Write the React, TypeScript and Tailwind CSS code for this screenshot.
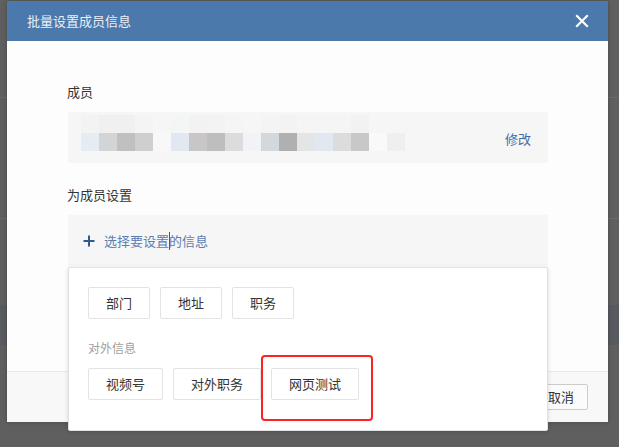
import React from "react";

const FONT = '"Noto Sans CJK SC", "Noto Sans", sans-serif';

const bottomRow = [
  "#e6ecf4", "#d3d4d6", "#c0c0be", "#cfcfcf", "#f7f8f7", "#e1e8f2", "#c8c6c6",
  "#bebebe", "#dcdcdd", "#f1f3f6", "#d3d8dd", "#b0b0b0", "#e4e5e7", "#e2e8f2",
  "#dcdcdc", "#c8c8c8", "#f9f9f9", "#efefef",
];
const topRow = [
  "#f3f3f3", "#f0f0f0", "#f0f0f0", "#f4f4f4", "#f6f6f6", "#f4f5f5", "#f2f2f2",
  "#f3f3f3", "#f5f5f5", "#f6f6f6", "#f4f4f4", "#f3f3f3", "#f5f5f5", "#f5f5f5",
  "#f5f5f5", "#f2f2f2", "#f6f6f6", "#f6f6f6",
];

function Btn({ children }: { children: React.ReactNode }) {
  return (
    <div className="h-[32px] px-[17px] flex items-center border border-[#e3e3e3] rounded-[2px] bg-white text-[13px] text-[#333]">
      {children}
    </div>
  );
}

export default function App() {
  return (
    <div
      className="relative w-[619px] h-[447px] overflow-hidden bg-[#5f5f5f]"
      style={{ fontFamily: FONT }}
    >
      {/* background page rows */}
      <div className="absolute inset-0 flex flex-col">
        <div className="h-[97px]" />
        <div className="h-[121px] border-t border-[#6a6a6a]" />
        <div className="h-[47px] border-t border-[#6a6a6a]" />
        <div className="h-[40px]" />
        <div className="h-[40px] bg-[#575a5e]" />
      </div>

      {/* modal */}
      <div className="absolute left-[7px] top-[1px] w-[601px] h-[421px] flex flex-col bg-[#fdfdfd] shadow-[0_0_4px_rgba(0,0,0,0.25)]">
        <div className="h-[40px] shrink-0 bg-[#4c79ab] flex items-center justify-between pl-[20px] pr-[19px]">
          <span className="text-[13px] text-[#e9eff7]">批量设置成员信息</span>
          <svg width="14" height="14" viewBox="0 0 14 14">
            <path d="M2 2 L12 12 M12 2 L2 12" stroke="#ffffff" strokeWidth="2.2" strokeLinecap="square" />
          </svg>
        </div>

        <div className="flex-1 flex flex-col pl-[60px] pt-[41px]">
          <div className="h-[20px] leading-[20px] text-[13px] text-[#333]">成员</div>
          <div className="mt-[10px] ml-[1px] w-[480px] h-[51px] bg-[#f6f6f6] flex items-start pt-[3px] pl-[13px] pr-[17px] relative">
            <div className="flex flex-col">
              <div className="flex">
                {topRow.map((c, i) => (
                  <div key={i} className="w-[18px] h-[18px]" style={{ backgroundColor: c }} />
                ))}
              </div>
              <div className="flex">
                {bottomRow.map((c, i) => (
                  <div key={i} className="w-[18px] h-[18px]" style={{ backgroundColor: c }} />
                ))}
              </div>
            </div>
            <div className="flex-1" />
            <div className="self-center text-[13px] text-[#3c6da7]">修改</div>
          </div>

          <div className="mt-[22px] h-[20px] leading-[20px] text-[13px] text-[#333]">为成员设置</div>
          <div className="mt-[10px] ml-[1px] w-[480px] h-[51px] bg-[#f6f6f6] flex items-center pl-[15px]">
            <svg width="12" height="12" viewBox="0 0 12 12">
              <path d="M6 0.5 V11.5 M0.5 6 H11.5" stroke="#33598d" strokeWidth="2" />
            </svg>
            <span className="ml-[9px] text-[13px] text-[#5b7db0] flex items-center">
              选择要设置
              <span className="inline-block w-[1px] h-[18px] bg-[#2f5c9f] -mr-[1px]" />
              的信息
            </span>
          </div>
        </div>

        <div className="h-[51px] shrink-0 border-t border-[#e9e9e9] bg-[#f8f8f8] flex items-center justify-end pr-[20px]">
          <div className="h-[26px] w-[54px] flex items-center justify-center border border-[#cccccc] rounded-[2px] bg-[#fbfbfb] text-[13px] text-[#333]">
            取消
          </div>
        </div>

        {/* dropdown */}
        <div className="absolute left-[61px] top-[266px] w-[480px] h-[164px] bg-white border border-[#e2e2e2] rounded-[2px] shadow-[0_1px_4px_rgba(0,0,0,0.15)] pt-[19px] pl-[19px] flex flex-col">
          <div className="flex gap-[10px]">
            <Btn>部门</Btn>
            <Btn>地址</Btn>
            <Btn>职务</Btn>
          </div>
          <div className="mt-[19px] h-[20px] leading-[20px] text-[12px] text-[#a0a0a0]">对外信息</div>
          <div className="mt-[10px] flex gap-[10px]">
            <Btn>视频号</Btn>
            <Btn>对外职务</Btn>
            <Btn>网页测试</Btn>
          </div>
          <div className="absolute left-[192px] top-[87px] w-[112px] h-[66px] border-2 border-[#ff2222] rounded-[4px]" />
        </div>
      </div>
    </div>
  );
}
